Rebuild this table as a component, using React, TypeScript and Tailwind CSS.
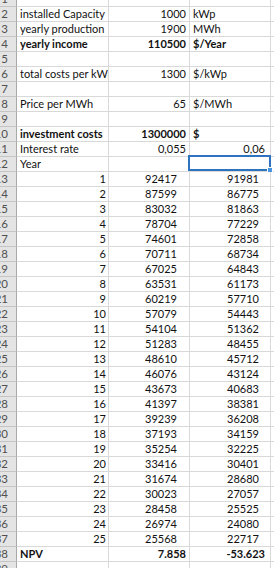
import React from 'react';

type Row = {
  n: number;
  a?: string;
  aRight?: boolean;
  b?: string;
  bPad?: boolean;
  c?: string;
  cRight?: boolean;
  cPad?: boolean;
  bold?: boolean;
  selected?: boolean;
};

const years: [number, number][] = [
  [92417, 91981],
  [87599, 86775],
  [83032, 81863],
  [78704, 77229],
  [74601, 72858],
  [70711, 68734],
  [67025, 64843],
  [63531, 61173],
  [60219, 57710],
  [57079, 54443],
  [54104, 51362],
  [51283, 48455],
  [48610, 45712],
  [46076, 43124],
  [43673, 40683],
  [41397, 38381],
  [39239, 36208],
  [37193, 34159],
  [35254, 32225],
  [33416, 30401],
  [31674, 28680],
  [30023, 27057],
  [28458, 25525],
  [26974, 24080],
  [25568, 22717],
];

const rows: Row[] = [
  { n: 1 },
  { n: 2, a: 'installed Capacity', b: '1000', c: 'kWp' },
  { n: 3, a: 'yearly production', b: '1900', c: 'MWh' },
  { n: 4, a: 'yearly income', b: '110500', c: '$/Year', bold: true },
  { n: 5 },
  { n: 6, a: 'total costs per kWp', b: '1300', c: '$/kWp' },
  { n: 7 },
  { n: 8, a: 'Price per MWh', b: '65', c: '$/MWh' },
  { n: 9 },
  { n: 10, a: 'investment costs', b: '1300000', c: '$', bold: true },
  { n: 11, a: 'Interest rate', b: '0,055', c: '0,06', cRight: true },
  { n: 12, a: 'Year', selected: true },
  ...years.map(([b, c], i) => ({
    n: 13 + i,
    a: String(i + 1),
    aRight: true,
    b: String(b),
    bPad: true,
    c: String(c),
    cRight: true,
    cPad: true,
  })),
  { n: 38, a: 'NPV', b: '7.858', c: '-53.623', cRight: true, bold: true },
  { n: 39 },
];

export default function App() {
  return (
    <div
      className="w-[274px] h-[568px] overflow-hidden bg-white text-[11px] text-[#111]"
      style={{ fontFamily: 'Lato, "Open Sans", sans-serif' }}
    >
      <div className="-mt-[8px]">
        {rows.map((r) => (
          <div
            key={r.n}
            className={`flex h-[15px] leading-[14px] ${r.bold ? 'font-bold' : ''}`}
          >
            {/* row header, only the last digit shows */}
            <div className="w-[17px] shrink-0 overflow-hidden bg-[#e4e4e4] border-r border-b border-r-[#a9a9a9] border-b-[#c4c4c4] text-[#505050] font-normal text-[11.5px]">
              <div className="w-[8px] flex justify-end whitespace-nowrap">
                {r.n}
              </div>
            </div>
            {/* A */}
            <div
              className={`w-[92px] shrink-0 border-r border-b border-[#d9d9d9] whitespace-nowrap ${
                r.aRight ? 'text-right pr-[2px]' : 'pl-[3px]'
              }`}
            >
              <span className={r.b ? 'block overflow-hidden' : ''}>{r.a}</span>
            </div>
            {/* B */}
            <div
              className={`w-[81px] shrink-0 border-r border-b border-[#d9d9d9] text-right ${
                r.bPad ? 'pr-[12px]' : 'pr-[3px]'
              }`}
            >
              {r.b}
            </div>
            {/* C */}
            <div
              className={`w-[81px] shrink-0 border-r border-b border-[#d9d9d9] relative ${
                r.cRight ? (r.cPad ? 'text-right pr-[11px]' : 'text-right pr-[5px]') : 'pl-[3px]'
              }`}
            >
              {r.c}
              {r.selected && (
                <div className="absolute -left-[2px] -top-[2px] w-[83px] h-[16px] border-2 border-[#2d73c0]">
                  <div className="absolute -right-[4px] -bottom-[4px] w-[6px] h-[6px] bg-[#4a95df] border border-white" />
                </div>
              )}
            </div>
            {/* D */}
            <div className="flex-1 border-b border-[#d9d9d9]" />
          </div>
        ))}
      </div>
    </div>
  );
}
